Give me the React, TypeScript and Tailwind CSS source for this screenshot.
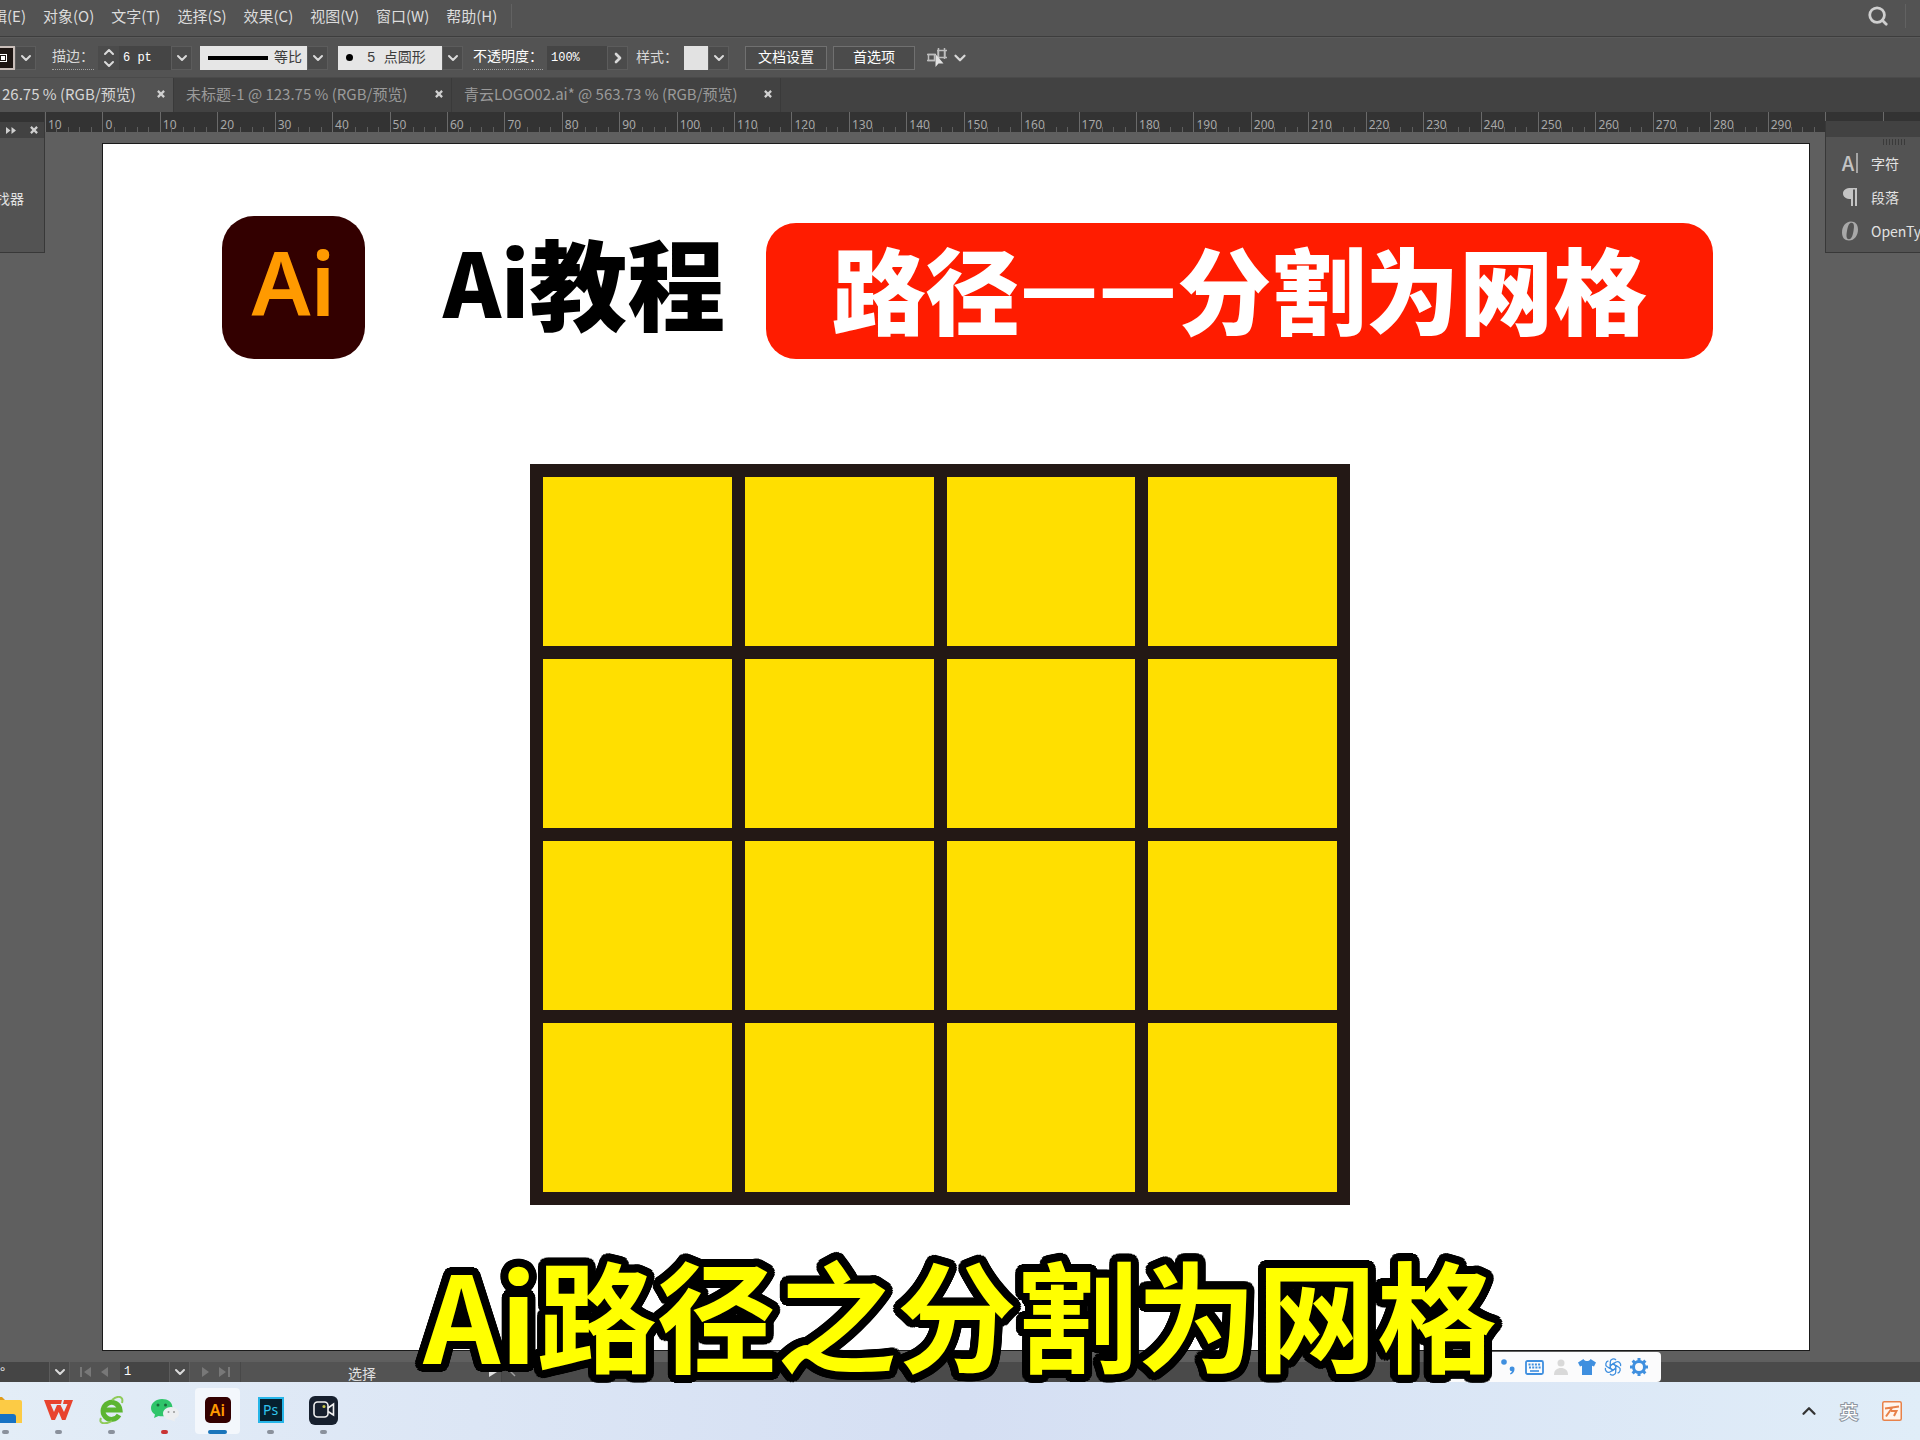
import { ReactNode } from 'react'
import { ChevronDown, ChevronRight, ChevronUp, Search } from 'lucide-react'

const MENUS = ['编辑(E)', '对象(O)', '文字(T)', '选择(S)', '效果(C)', '视图(V)', '窗口(W)', '帮助(H)']

const TABS = [
  { name: '26.75 % (RGB/预览)', cls: 'w-[174px] pl-0.5 bg-[#535353] text-[#d6d6d6]' },
  { name: '未标题-1 @ 123.75 % (RGB/预览)', cls: 'w-[278px] pl-3 text-[#9a9a9a]' },
  { name: '青云LOGO02.ai* @ 563.73 % (RGB/预览)', cls: 'w-[329px] pl-3 text-[#9a9a9a]' },
]

// -10 is printed without its sign, like the real ruler does
const RULER = Array.from({ length: 33 }, (_, i) => Math.abs(i * 10 - 10))

// ring of hard shadows = round outline round the caption
const OUTLINE = Array.from({ length: 32 }, (_, i) => {
  const a = (i * Math.PI) / 16
  return `${(Math.cos(a) * 8).toFixed(1)}px ${(Math.sin(a) * 8).toFixed(1)}px 0 #000`
}).join(',')

function Drop({ label }: { label: string }) {
  return (
    <button aria-label={label} className="flex h-6 w-[21px] items-center justify-center border border-[#5c5c5c] bg-[#4b4b4b] text-[#dadada]">
      <ChevronDown size={16} strokeWidth={3} className="shrink-0" />
    </button>
  )
}

function MenuBar() {
  return (
    <nav className="flex h-[37px] items-center border-b border-[#3d3d3d] pb-1 text-[15px] text-[#dcdcdc]">
      <div className="-ml-[23px] flex gap-[17px]">
        {MENUS.map((m) => (
          <button key={m} className="whitespace-nowrap">{m}</button>
        ))}
      </div>
      <span className="ml-3.5 h-6 w-px bg-[#626262]" />
      <button aria-label="搜索" className="ml-auto text-[#cfcfcf]">
        <Search size={22} strokeWidth={3} />
      </button>
      <span className="mr-3.5 ml-4 h-6 w-px bg-[#626262]" />
    </nav>
  )
}

function ControlBar() {
  return (
    <div className="flex h-10 items-center border-t border-[#5a5a5a] font-['Liberation_Mono','Noto_Sans_CJK_SC',monospace] text-sm text-[#d8d8d8]">
      <button aria-label="描边颜色" className="-ml-2 flex h-6 w-[23px] items-center justify-end border-2 border-[#c8bdb8] bg-[#1d1512] pr-1.5">
        <span className="size-2 border border-white bg-[#1d1512] p-px"><span className="block size-1 bg-white" /></span>
      </button>
      <Drop label="描边颜色列表" />
      <label htmlFor="stroke" className="ml-4 border-b border-dotted border-[#a0a0a0] leading-6">描边：</label>
      <div className="ml-1 flex h-6 w-[21px] flex-col items-center justify-between bg-[#4b4b4b] text-[#dadada]">
        <button aria-label="增加" className="flex h-3 items-center"><ChevronUp size={16} strokeWidth={3} /></button>
        <button aria-label="减少" className="flex h-3 items-center"><ChevronDown size={16} strokeWidth={3} /></button>
      </div>
      <input id="stroke" defaultValue="6 pt" className="h-6 w-[52px] bg-[#454545] px-1 text-xs text-white" />
      <Drop label="描边粗细" />
      <button className="ml-2 flex h-6 w-[107px] items-center gap-1.5 bg-[#e6e6e6] pl-2 text-[#3c3c3c]">
        <span className="h-1 w-[60px] bg-black" />
        <span className="whitespace-nowrap">等比</span>
      </button>
      <Drop label="宽度配置" />
      <button className="ml-2.5 flex h-6 w-[104px] items-center bg-[#e6e6e6] pl-2 text-[#3c3c3c]">
        <span className="mr-3.5 size-[7px] rounded-full bg-black" />
        <span className="whitespace-nowrap">5 点圆形</span>
      </button>
      <Drop label="画笔定义" />
      <label htmlFor="opacity" className="ml-2.5 border-b border-dotted border-[#a0a0a0] leading-6 text-white">不透明度：</label>
      <input id="opacity" defaultValue="100%" className="ml-1 h-6 w-[60px] bg-[#454545] px-1 text-xs text-white" />
      <button aria-label="不透明度列表" className="flex h-6 w-[21px] items-center justify-center border border-[#5c5c5c] bg-[#4b4b4b]">
        <ChevronRight size={16} strokeWidth={4} />
      </button>
      <span className="ml-2">样式：</span>
      <button aria-label="图形样式" className="ml-1.5 h-6 w-6 bg-[#e2e2e2]" />
      <Drop label="样式列表" />
      <button className="ml-4 h-6 w-[82px] border border-[#707070] bg-[#4b4b4b] text-white">文档设置</button>
      <button className="ml-1.5 h-6 w-[82px] border border-[#707070] bg-[#4b4b4b] text-white">首选项</button>
      <button aria-label="选择类似对象" className="ml-3 flex items-center gap-1 text-[#d8d8d8]">
        <svg width="20" height="20" viewBox="0 0 20 20" fill="none" stroke="#bdbdbd" strokeWidth="1.5">
          <rect x="1.5" y="6.5" width="6" height="6" />
          <path d="M0 6.500h9M0 12.500h8M11 2.500h7v7h-7zM10 2.500h10M10 9.500h10M11.500 0v11M17.500 0v11" />
          <path d="M8.500 6v13l3-3.500h5z" fill="#e2e2e2" stroke="none" />
        </svg>
        <ChevronDown size={18} strokeWidth={3} />
      </button>
    </div>
  )
}

function TabBar() {
  return (
    <div className="flex h-[35px] border-t border-[#4a4a4a] bg-[#424242] text-[15px]">
      {TABS.map((t) => (
        <div key={t.name} className={'flex items-center justify-between border-r border-[#3a3a3a] pr-2 pb-0.5 ' + t.cls}>
          <button className="whitespace-nowrap">{t.name}</button>
          <button aria-label="关闭" className="text-[#d0d0d0]">
            <svg width="8" height="8" viewBox="0 0 9 9" stroke="currentColor" strokeWidth="2.500"><path d="M1 1l7 7M8 1L1 8" /></svg>
          </button>
        </div>
      ))}
    </div>
  )
}

function Ruler() {
  return (
    <div className="h-5 overflow-hidden bg-[#333333] pl-[45px]">
      <div className="-mr-[20px] flex h-5 font-['Noto_Sans',sans-serif] text-xs text-[#a8a8a8]">
        {RULER.map((n, i) => (
          <div key={i} className="relative min-w-0 flex-1 border-l border-[#6a6a6a] pl-0.5 leading-[26px]">
            {i < 31 && n}
            <div className="absolute inset-x-0 bottom-0 flex h-[5px]">
              {[0, 1, 2, 3, 4].map((k) => (
                <span key={k} className="flex-1 border-r border-[#5e5e5e] last:border-0" />
              ))}
            </div>
          </div>
        ))}
      </div>
    </div>
  )
}

function Artboard() {
  return (
    <main className="mt-[11px] mr-[110px] mb-[11px] ml-[102px] flex-1 border border-[#1a1a1a] bg-white">
      <div className="flex h-[215px] items-end pr-24 pl-[119px]">
        <div className="flex size-[143px] shrink-0 items-center justify-center rounded-[32px] bg-[#330000] pb-3 font-['Noto_Sans',sans-serif] text-[88px] leading-none font-semibold text-[#ff9a00]">
          Ai
        </div>
        <h1 className="flex h-[143px] w-[401px] shrink-0 items-center pb-4 pl-[78px] text-[98px] leading-none font-black whitespace-nowrap text-black">
          <span className="text-[88px]">Ai</span>教程
        </h1>
        <h2 className="flex h-[136px] flex-1 items-center justify-center rounded-[30px] bg-[#ff1c00] pb-2 text-[94px] leading-none font-black whitespace-nowrap text-white">
          路径<span className="pb-3 text-[86px]">—</span><span className="pb-3 text-[86px]">—</span>分割为网格
        </h2>
      </div>
      <div className="mt-[105px] ml-[427px] grid h-[741px] w-[820px] grid-cols-4 grid-rows-4 gap-[13px] bg-[#231815] p-[13px]">
        {Array.from({ length: 16 }, (_, i) => (
          <div key={i} className="bg-[#ffdf00]" />
        ))}
      </div>
    </main>
  )
}

function PanelRow({ icon, children }: { icon: ReactNode; children: ReactNode }) {
  return (
    <button className="flex h-[34px] shrink-0 items-center gap-3 pl-[15px] text-sm text-[#e2e2e2]">
      <span className="flex w-[18px] justify-center text-[#c4c4c4]">{icon}</span>
      <span className="whitespace-nowrap">{children}</span>
    </button>
  )
}

function SidePanels() {
  return (
    <>
      <aside className="absolute top-0 left-0 h-[141px] w-[45px] border-r border-b border-[#383838] bg-[#535353]">
        <div className="flex h-[26px] items-end justify-end gap-3.5 border-t-[10px] border-[#333333] bg-[#424242] pr-1.5 pb-1 text-[#cfcfcf]">
          <svg width="10" height="7" viewBox="0 0 10 7" fill="currentColor"><path d="M0 0l4.500 3.500L0 7zM5.500 0L10 3.500 5.500 7z" /></svg>
          <svg width="8" height="8" viewBox="0 0 9 9" stroke="currentColor" strokeWidth="2.500"><path d="M1 1l7 7M8 1L1 8" /></svg>
        </div>
        <button className="mt-[50px] -ml-[18px] text-sm whitespace-nowrap text-[#e2e2e2]">查找器</button>
      </aside>
      <aside className="absolute top-[9px] right-0 flex h-[132px] w-[95px] flex-col overflow-hidden border-b border-l border-[#383838] bg-[#535353]">
        <div className="h-4 shrink-0 bg-[#424242]" />
        <div className="mt-0.5 mb-px ml-[57px] flex h-1.5 shrink-0 gap-0.5">
          {[0, 1, 2, 3, 4, 5, 6, 7].map((i) => <span key={i} className="w-px bg-[#3a3a3a]" />)}
        </div>
        <PanelRow icon={<span className="border-r-2 border-[#a5a5a5] pr-0.5 text-xl leading-5 font-medium">A</span>}>字符</PanelRow>
        <PanelRow icon={
          <svg width="15" height="18" viewBox="0 0 15 18"><path d="M8 0v11C3 11 0 9 0 5.500S3 0 8 0zM8 0h2v18H8zM12 0h2v18h-2zM8 0h6v1.500H8z" fill="#c4c4c4" /></svg>
        }>段落</PanelRow>
        <PanelRow icon={
          <svg width="18" height="20" viewBox="0 0 18 20"><path fillRule="evenodd" d="M10 .5C4.500.5 1 5.500 1 11.500c0 5 2.500 8 7 8 5.500 0 9-5 9-11 0-5-2.500-8-7-8zm.5 1.300c2.500 0 3 3 2 8.200-1 6-2.500 8.200-4.500 8.200-2.500 0-3-3-2-8.200 1-6 2.500-8.200 4.500-8.200z" fill="#a8a8a8" /></svg>
        }>OpenType</PanelRow>
      </aside>
    </>
  )
}

function StatusBar() {
  return (
    <div className="flex h-5 items-center bg-[#4a4a4a] text-[#e0e0e0]">
      <div className="flex h-5 w-[502px] items-center overflow-hidden border-r border-[#444444] bg-[#535353]">
        <input aria-label="旋转" defaultValue="°" className="h-5 w-[49px] bg-[#454545] text-sm" />
        <Drop label="旋转列表" />
        <button aria-label="首项" className="ml-2.5 text-[#787878]">
          <svg width="11" height="10" viewBox="0 0 11 10" fill="currentColor"><path d="M0 0h2v10H0zM11 0v10L4 5z" /></svg>
        </button>
        <button aria-label="上一项" className="ml-2.5 text-[#787878]">
          <svg width="7" height="10" viewBox="0 0 7 10" fill="currentColor"><path d="M7 0v10L0 5z" /></svg>
        </button>
        <input aria-label="画板导航" defaultValue="1" className="ml-3 h-5 w-[49px] bg-[#454545] px-1 font-['Liberation_Mono',monospace] text-xs text-white" />
        <Drop label="画板列表" />
        <button aria-label="下一项" className="ml-3 text-[#787878]">
          <svg width="7" height="10" viewBox="0 0 7 10" fill="currentColor"><path d="M0 0v10l7-5z" /></svg>
        </button>
        <button aria-label="末项" className="ml-2.5 text-[#787878]">
          <svg width="11" height="10" viewBox="0 0 11 10" fill="currentColor"><path d="M9 0h2v10H9zM0 0v10l7-5z" /></svg>
        </button>
        <span className="ml-2.5 h-5 w-px bg-[#484848]" />
        <span className="ml-[107px] pt-0.5 text-sm leading-5">选择</span>
        <svg className="mr-1 ml-auto" width="8" height="10" viewBox="0 0 8 10" fill="#e0e0e0"><path d="M0 0v10l8-5z" /></svg>
      </div>
      <svg className="ml-2" width="6" height="10" viewBox="0 0 6 10" fill="none" stroke="#a0a0a0" strokeWidth="1.500"><path d="M5 1L1 5l4 4" /></svg>
    </div>
  )
}

function ImeBar() {
  return (
    <div className="absolute right-[259px] bottom-[58px] flex h-[30px] w-[222px] items-center rounded-[4px] bg-[#fbfbfc] pl-1 text-[#3f8fdf]">
      <svg width="22" height="22" viewBox="0 0 22 22"><circle cx="11" cy="11" r="11" fill="#f2692e" /><path d="M15 6c-3-2-7-1-7 1.500s6 2 6 5-4 3.500-7 1.500" fill="none" stroke="#fff" strokeWidth="2.500" /></svg>
      <svg className="ml-2" width="18" height="16" viewBox="0 0 18 16" fill="none" stroke="currentColor" strokeWidth="2"><path d="M0 3h18M2 8h15M0 13h18M9 3v10" /></svg>
      <svg className="ml-2.5" width="14" height="16" viewBox="0 0 14 16" fill="currentColor"><circle cx="3" cy="3" r="2.800" /><path d="M11 7.500a2.500 2.500 0 0 1 2.500 2.700c0 2.600-1.600 4.600-4 5.300l-.5-1c1-.5 1.700-1.200 2-2.200a2.400 2.400 0 1 1 0-4.800z" /></svg>
      <svg className="ml-2.5" width="19" height="15" viewBox="0 0 19 15" fill="none" stroke="currentColor">
        <rect x="1" y="1" width="17" height="13" rx="1.500" strokeWidth="1.800" />
        <path d="M3.500 4.500h12M4 7.500h12" strokeWidth="1.800" strokeDasharray="2 1.200" /><path d="M5 11h9" strokeWidth="1.600" />
      </svg>
      <svg className="ml-2.5" width="14" height="16" viewBox="0 0 14 16" fill="#d9d9d9"><circle cx="7" cy="4" r="3.500" /><path d="M0 16c0-5 3-7 7-7s7 2 7 7z" /></svg>
      <svg className="ml-2.5" width="18" height="16" viewBox="0 0 18 16" fill="currentColor"><path d="M5.500 0C6 1.500 7.500 2 9 2s3-.5 3.500-2L18 3.500l-2 4-2-.8V16H4V6.700l-2 .8-2-4z" /></svg>
      <svg className="ml-2" width="18" height="18" viewBox="0 0 18 18" fill="none" stroke="currentColor" strokeWidth="1.300">
        {[0, 60, 120, 180, 240, 300].map((a) => (
          <path key={a} transform={`rotate(${a} 9 9)`} d="M6.300 7.500V3.800C6.300 1 10 0 12 2M6.300 7.500L9 6l4 2.300" />
        ))}
      </svg>
      <svg className="ml-2" width="18" height="18" viewBox="0 0 18 18" fill="none" stroke="currentColor">
        <circle cx="9" cy="9" r="5.500" strokeWidth="3" />
        {[0, 45, 90, 135, 180, 225, 270, 315].map((a) => (
          <path key={a} transform={`rotate(${a} 9 9)`} d="M9 0v3" strokeWidth="3" />
        ))}
      </svg>
    </div>
  )
}

function TaskIcon({ label, dot, active, children }: { label: string; dot: string; active?: boolean; children: ReactNode }) {
  return (
    <button aria-label={label} className={'flex h-[46px] w-[45px] shrink-0 flex-col items-center justify-between rounded-[4px] pt-[7px] ' + (active ? 'bg-[#f3f7fc]' : '')}>
      <span className="flex h-[30px] items-center">{children}</span>
      <span className={'h-1 rounded-full ' + dot} />
    </button>
  )
}

function TaskBar() {
  return (
    <footer className="flex h-[58px] items-center bg-linear-to-r from-[#e3edf7] via-[#d5dff3] to-[#e0edf8] text-[#333333]">
      <div className="-ml-[17px] flex gap-2">
        <TaskIcon label="文件资源管理器" dot="w-[7px] bg-[#8a919c]">
          <svg width="32" height="26" viewBox="0 0 32 26"><path d="M0 2q0-2 2-2h10l4 4h-16z" fill="#e09d1b" /><path d="M0 3h30q2 0 2 2v21H0z" fill="#fccb45" /><path d="M2 26v-6q0-3 3-3h18q3 0 3 3v6z" fill="#1672c4" /></svg>
        </TaskIcon>
        <TaskIcon label="WPS" dot="w-[7px] bg-[#8a919c]">
          <svg width="29" height="20" viewBox="0 0 29 20"><path d="M0 0h18l-1 4H6.500l3.500 8 3-7h3.500l3.500 7 3.500-8H19l1-4h9l-7.500 20h-3.500l-3.300-8-3.700 8H7.500z" fill="#e8432e" /></svg>
        </TaskIcon>
        <TaskIcon label="360浏览器" dot="w-[7px] bg-[#8a919c]">
          <svg width="26" height="28" viewBox="0 0 26 28" fill="none"><path d="M20 19a8.500 8.500 0 1 1 1-5H6" stroke="#5cb531" strokeWidth="5" /><path d="M2 22C-1 29 8 28 13 25M13 4c6-5 12-4 10 3" stroke="#8fcb5a" strokeWidth="2" /></svg>
        </TaskIcon>
        <TaskIcon label="微信" dot="w-[7px] bg-[#c93434]">
          <svg width="28" height="24" viewBox="0 0 28 24"><path d="M11 1C5 1 0 5 0 10c0 3 1.500 5 4 6.500L3 20l4.500-2c8 1.500 14-2 14-8S17 1 11 1z" fill="#2fc56a" /><circle cx="7" cy="7" r="1.500" fill="#1a6b3c" /><circle cx="14.500" cy="7" r="1.500" fill="#1a6b3c" /><path d="M20 9c-4.500 0-8 3-8 6.500s3.500 6.500 8 6.500l4 1.500-.5-2.500c3-1.500 4.500-3 4.500-5.500C28 12 24.500 9 20 9z" fill="#eceef0" /><circle cx="17.500" cy="14" r="1" fill="#999" /><circle cx="23" cy="14" r="1" fill="#999" /></svg>
        </TaskIcon>
        <TaskIcon label="Illustrator" dot="w-[19px] bg-[#1a75bb]" active>
          <span className="flex size-[26px] items-center justify-center rounded-[5px] bg-[#330000] font-['Noto_Sans',sans-serif] text-base leading-none font-semibold text-[#ff9a00]">Ai</span>
        </TaskIcon>
        <TaskIcon label="Photoshop" dot="w-[7px] bg-[#8a919c]">
          <span className="flex size-[26px] items-center justify-center border-2 border-[#26b5e8] bg-[#06202e] font-['Noto_Sans',sans-serif] text-sm leading-none text-[#31c5f0]">Ps</span>
        </TaskIcon>
        <TaskIcon label="录屏" dot="w-[7px] bg-[#8a919c]">
          <span className="flex size-[29px] items-center justify-center rounded-md bg-[#17202e]">
            <svg width="22" height="18" viewBox="0 0 22 18" fill="none" stroke="#f0f0f0" strokeWidth="1.600"><rect x="1" y="1" width="14" height="15" rx="3.500" /><path d="M15 7l5.500-4v11L15 10.500" /><circle cx="11" cy="5.500" r=".8" stroke="#c9c94a" /></svg>
          </span>
        </TaskIcon>
      </div>
      <div className="mr-[18px] ml-auto flex items-center gap-5">
        <button aria-label="显示隐藏的图标"><ChevronUp size={22} strokeWidth={2.5} /></button>
        <span className="text-lg leading-none text-white [-webkit-text-stroke:2px_#8c949e] [paint-order:stroke]">英</span>
        <svg className="ml-1" width="20" height="20" viewBox="0 0 20 20" fill="none" stroke="#e8824a"><rect x=".75" y=".75" width="18.500" height="18.500" rx="1.500" fill="#fff6ee" strokeWidth="1.500" /><path d="M3 7.500l14-2M10 7L4 15.500M9 10h5.500L12 15" strokeWidth="2" /></svg>
      </div>
    </footer>
  )
}

export default function App() {
  return (
    <div className="relative flex min-h-screen flex-col overflow-hidden bg-[#535353] font-['Noto_Sans_CJK_SC',sans-serif]">
      <MenuBar />
      <ControlBar />
      <TabBar />
      <div className="relative flex flex-1 flex-col bg-[#5f5f5f]">
        <Ruler />
        <Artboard />
        <SidePanels />
      </div>
      <StatusBar />
      <TaskBar />
      <ImeBar />
      <p className="absolute inset-x-0 bottom-[68px] text-center text-[120px] leading-none font-bold whitespace-nowrap text-[#ffff00]" style={{ textShadow: OUTLINE }}>
        Ai路径之分割为网格
      </p>
    </div>
  )
}
